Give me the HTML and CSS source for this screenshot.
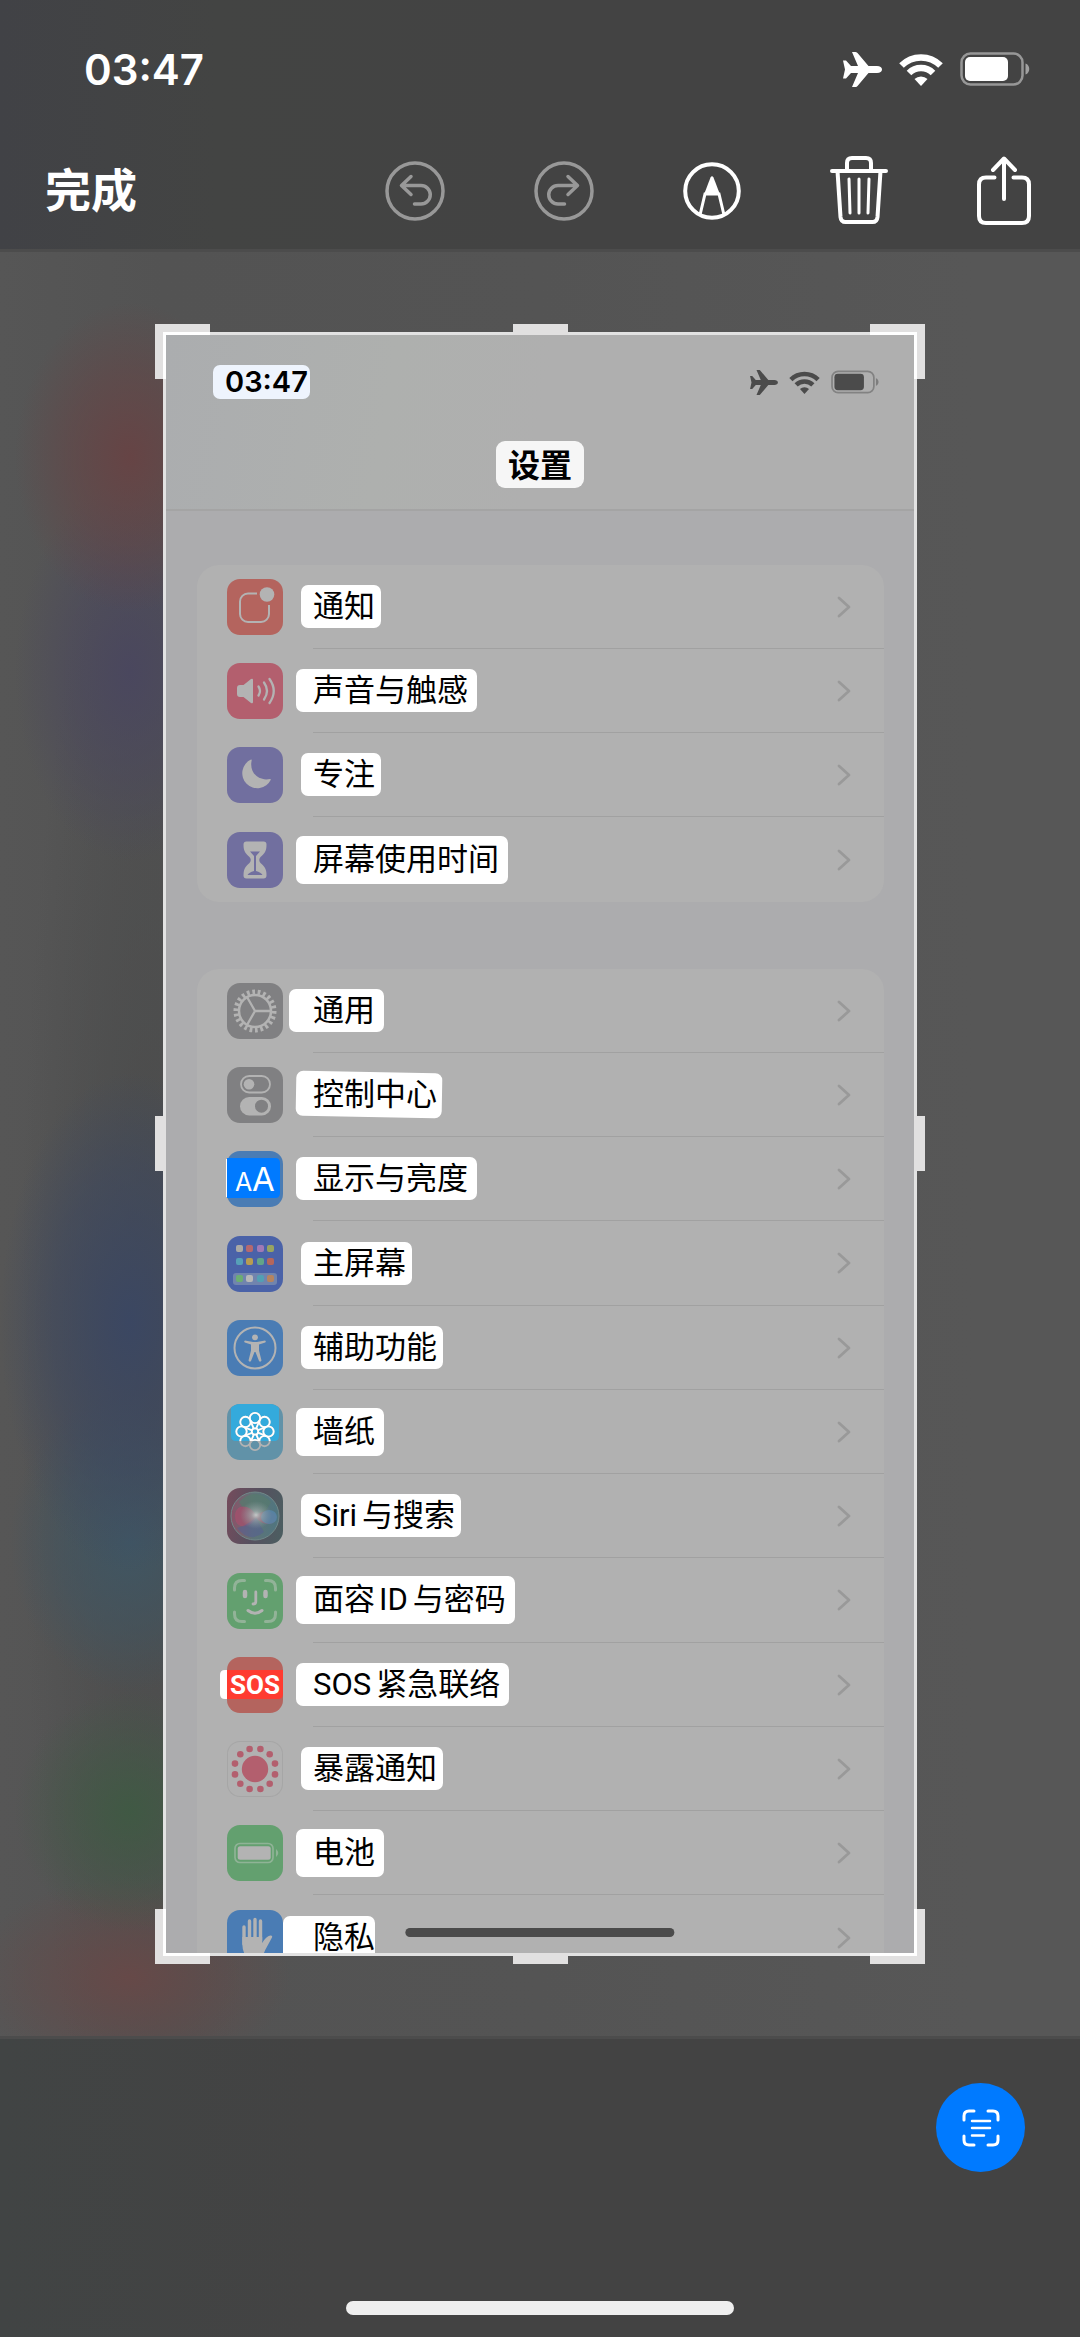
FILE: index.html
```html
<!DOCTYPE html>
<html lang="zh-CN">
  <head>
    <meta charset="UTF-8" />
    <meta name="viewport" content="width=device-width, initial-scale=1" />
    <title>截屏编辑</title>
    <link rel="stylesheet" href="styles.css">
  </head>
  <body>
    <svg class="sprite" aria-hidden="true">
      <symbol id="plane" viewBox="0 0 39 35">
        <path fill="currentColor" d="M39 17.500c0 2.200-2 3.500-5 3.500h-8.500L14.500 34c-.8 1-1.500 1-3 1H9l6-14H8l-5 5.500H0L2 17.500 0 8.500h3L8 14h7L9 0h2.500c1.500 0 2.200 0 3 1L25.500 14H34c3 0 5 1.300 5 3.500z"/>
      </symbol>
      <symbol id="wifi" viewBox="0 0 44 33">
        <g fill="none" stroke="currentColor" stroke-width="6.500">
          <path d="M2.500 12.500a27.500 27.500 0 0 1 39 0"/>
          <path d="M10 20a17 17 0 0 1 24 0"/>
        </g>
        <path fill="currentColor" d="M15.500 26a9.500 9.500 0 0 1 13 0L22 33z"/>
      </symbol>
      <symbol id="battery" viewBox="0 0 70 34">
        <rect x="1.500" y="1.500" width="61" height="31" rx="9" fill="none" stroke="currentColor" stroke-width="2.500" opacity=".45"/>
        <rect x="5" y="5" width="43" height="24" rx="5" fill="currentColor"/>
        <path d="M65.500 11.500c5 1.500 5 9.500 0 11z" fill="currentColor" opacity=".5"/>
      </symbol>
      <symbol id="chevron" viewBox="0 0 14 22">
        <path d="M2 2l10 9L2 20" fill="none" stroke="currentColor" stroke-width="2.800" stroke-linecap="round" stroke-linejoin="round"/>
      </symbol>
      <symbol id="flower" viewBox="0 0 56 56">
        <g fill="none" stroke="currentColor" stroke-width="1.800">
          <circle cx="28" cy="27.500" r="3.200"/>
          <g id="petals">
            <circle cx="28" cy="14" r="5.200"/>
            <circle cx="28" cy="41" r="5.200"/>
            <circle cx="14.500" cy="27.500" r="5.200"/>
            <circle cx="41.500" cy="27.500" r="5.200"/>
            <path d="M31 28.700l8 3.300M26.800 30.500l-3.300 8M25 26.300l-8-3.300M29.200 24.500l3.300-8"/>
          </g>
          <use href="#petals" transform="rotate(45 28 27.500)"/>
        </g>
      </symbol>
    </svg>

    <header class="topbar">
      <div class="status">
        <time class="clock">03:47</time>
        <div class="status-icons">
          <svg class="i-plane"><use href="#plane"/></svg>
          <svg class="i-wifi"><use href="#wifi"/></svg>
          <svg class="i-battery"><use href="#battery"/></svg>
        </div>
      </div>
      <nav class="toolbar">
        <button class="done" type="button">完成</button>
        <div class="tools">
          <button type="button" aria-label="撤销" disabled>
            <svg width="60" height="60" viewBox="0 0 60 60" fill="none" stroke="currentColor" stroke-width="3.500" stroke-linecap="round" stroke-linejoin="round">
              <circle cx="30" cy="30" r="28"/>
              <path d="M26 15.500L16.500 24.500 26 33.500M17 24.500h19a9 9 0 0 1 0 18.500h-6.500"/>
            </svg>
          </button>
          <button type="button" aria-label="重做" disabled>
            <svg width="60" height="60" viewBox="0 0 60 60" fill="none" stroke="currentColor" stroke-width="3.500" stroke-linecap="round" stroke-linejoin="round">
              <circle cx="30" cy="30" r="28"/>
              <path d="M34 15.500l9.500 9-9.500 9M43 24.500H24a9 9 0 0 0 0 18.500h6.500"/>
            </svg>
          </button>
          <button type="button" aria-label="标记">
            <svg width="58" height="58" viewBox="0 0 58 58" fill="none" stroke="currentColor" stroke-width="4">
              <circle cx="29" cy="29" r="26.800"/>
              <path d="M17 53l5-21h14l5 21" stroke-width="3"/>
              <path d="M21 32.500l6.500-17q1.500-2.500 3 0l6.500 17z" fill="currentColor" stroke="none"/>
            </svg>
          </button>
          <button type="button" aria-label="删除">
            <svg width="58" height="70" viewBox="0 0 58 70" fill="none" stroke="currentColor" stroke-width="4" stroke-linecap="round" stroke-linejoin="round">
              <path d="M2 15h54M17 14V7q0-5 5-5h14q5 0 5 5v7M7.500 15l3 46q.5 5 5 5h27q4.500 0 5-5l3-46"/>
              <path d="M19 23l1 34M29 23v34M39 23l-1 34" stroke-width="3"/>
            </svg>
          </button>
          <button type="button" aria-label="共享">
            <svg width="54" height="70" viewBox="0 0 54 70" fill="none" stroke="currentColor" stroke-width="4" stroke-linecap="round" stroke-linejoin="round">
              <path d="M17.500 21.500H9q-7 0-7 7V60q0 7 7 7h36q7 0 7-7V28.500q0-7-7-7h-8.500M27 43V3M16 14L27 2.500 38 14"/>
            </svg>
          </button>
        </div>
      </nav>
    </header>

    <main class="canvas">
      <div class="crop">
        <div class="shot">
          <header class="shot-head">
            <div class="status">
              <time class="clock">03:47</time>
              <div class="status-icons">
                <svg class="i-plane"><use href="#plane"/></svg>
                <svg class="i-wifi"><use href="#wifi"/></svg>
                <svg class="i-battery"><use href="#battery"/></svg>
              </div>
            </div>
            <h1><span>设置</span></h1>
          </header>

          <ul class="group">
            <li><a class="row" href="#">
              <svg class="icon red" viewBox="0 0 56 56">
                <path d="M30 14.500h-9a8 8 0 0 0-8 8V35a8 8 0 0 0 8 8h13a8 8 0 0 0 8-8v-9" fill="none" stroke="currentColor" stroke-width="2"/>
                <circle cx="40" cy="15.500" r="7.300" fill="currentColor"/>
              </svg>
              <span class="cell"><span class="mark">通知</span><svg class="chev"><use href="#chevron"/></svg></span>
            </a></li>
            <li><a class="row" href="#">
              <svg class="icon pink" viewBox="0 0 56 56">
                <path d="M10 25q0-3 3-3h3.500l7.500-6q2-1 2 1v22q0 2-2 1l-7.500-6H13q-3 0-3-3z" fill="currentColor"/>
                <path d="M31.500 23.500q3 4.500 0 9M37 19.500q6 8.500 0 17M42.500 16q8.500 12 0 24" fill="none" stroke="currentColor" stroke-width="2.300" stroke-linecap="round"/>
              </svg>
              <span class="cell"><span class="mark wide">声音与触感</span><svg class="chev"><use href="#chevron"/></svg></span>
            </a></li>
            <li><a class="row" href="#">
              <svg class="icon purple" viewBox="0 0 56 56">
                <path d="M24 12.600q.8-.3.700.7C22 25 31 34.500 43 32q1-.2.800.7A15 15 0 1 1 24 12.600z" fill="currentColor"/>
              </svg>
              <span class="cell"><span class="mark">专注</span><svg class="chev"><use href="#chevron"/></svg></span>
            </a></li>
            <li><a class="row" href="#">
              <svg class="icon purple" viewBox="0 0 56 56">
                <path d="M19.500 9.500h17q3 0 3 3c0 7-2 9-6 12.500q-2.500 3 0 6c4 3.500 6 5.500 6 12.500q0 3-3 3h-17q-3 0-3-3c0-7 2-9 6-12.500q2.500-3 0-6c-4-3.500-6-5.500-6-12.500q0-3 3-3z" fill="currentColor"/>
                <path d="M23 19.500h10l-4 4.500v15q5 1.500 6.500 4h-15q1.500-2.500 6.500-4V24z" fill="#716f9f"/>
              </svg>
              <span class="cell"><span class="mark wide tall">屏幕使用时间</span><svg class="chev"><use href="#chevron"/></svg></span>
            </a></li>
          </ul>

          <ul class="group">
            <li><a class="row" href="#">
              <svg class="icon gray" viewBox="0 0 56 56">
                <g fill="none" stroke="currentColor">
                  <circle cx="28" cy="28" r="16" stroke-width="2.500"/>
                  <circle cx="28" cy="28" r="19" stroke-width="5" pathLength="44" stroke-dasharray="1 1"/>
                  <path d="M28 28h16M28 28l-8-14M28 28l-8 14" stroke-width="2.300"/>
                </g>
              </svg>
              <span class="cell"><span class="mark far">通用</span><svg class="chev"><use href="#chevron"/></svg></span>
            </a></li>
            <li><a class="row" href="#">
              <svg class="icon gray" viewBox="0 0 56 56">
                <rect x="14" y="9" width="29" height="16.500" rx="8.200" fill="none" stroke="currentColor" stroke-width="1.800"/>
                <circle cx="22" cy="17.200" r="5.300" fill="currentColor"/>
                <rect x="13" y="30" width="31" height="18.500" rx="9.200" fill="currentColor"/>
                <circle cx="34.500" cy="39.200" r="6.500" fill="#808082"/>
              </svg>
              <span class="cell"><span class="mark wide tilt">控制中心</span><svg class="chev"><use href="#chevron"/></svg></span>
            </a></li>
            <li><a class="row" href="#">
              <svg class="icon blue" viewBox="0 0 56 56">
                <path d="M-1 8h4v38h-4z" fill="#fff"/>
                <path d="M0 7h48q5 0 5 5v30q0 5-5 5H0z" fill="#007aff"/>
                <text class="glyph-text" x="8" y="40" font-size="25">A</text>
                <text class="glyph-text" x="25" y="40" font-size="33">A</text>
              </svg>
              <span class="cell"><span class="mark wide">显示与亮度</span><svg class="chev"><use href="#chevron"/></svg></span>
            </a></li>
            <li><a class="row" href="#">
              <svg class="icon indigo" viewBox="0 0 56 56">
                <rect x="6" y="37" width="44" height="12" rx="3" fill="#7184ae"/>
                <rect x="9" y="9" width="7" height="7" rx="2" fill="#aaa9a5"/>
                <rect x="19" y="9" width="7" height="7" rx="2" fill="#b5686e"/>
                <rect x="30" y="9" width="7" height="7" rx="2" fill="#a079b6"/>
                <rect x="40" y="9" width="7" height="7" rx="2" fill="#98a460"/>
                <rect x="9" y="22" width="7" height="7" rx="2" fill="#57a0b8"/>
                <rect x="19" y="22" width="7" height="7" rx="2" fill="#b89c50"/>
                <rect x="30" y="22" width="7" height="7" rx="2" fill="#63a488"/>
                <rect x="40" y="22" width="7" height="7" rx="2" fill="#b5665c"/>
                <rect x="9" y="39" width="7" height="7" rx="2" fill="#6cae72"/>
                <rect x="19" y="39" width="7" height="7" rx="2" fill="#b8b8b8"/>
                <rect x="30" y="39" width="7" height="7" rx="2" fill="#52a0b4"/>
                <rect x="40" y="39" width="7" height="7" rx="2" fill="#b58460"/>
              </svg>
              <span class="cell"><span class="mark">主屏幕</span><svg class="chev"><use href="#chevron"/></svg></span>
            </a></li>
            <li><a class="row" href="#">
              <svg class="icon blue" viewBox="0 0 56 56">
                <circle cx="28" cy="28" r="20.500" fill="none" stroke="currentColor" stroke-width="2"/>
                <circle cx="28" cy="17.300" r="2.900" fill="currentColor"/>
                <path d="M18 20.500l8 1.500h4l8-1.500q1.500.8.2 2L32 24.500v6l2.500 10q-1 2-2.500.5l-3.500-9h-1l-3.500 9q-1.500 1.500-2.500-.5l2.500-10v-6l-6.200-2q-1.300-1.200.2-2z" fill="currentColor"/>
              </svg>
              <span class="cell"><span class="mark">辅助功能</span><svg class="chev"><use href="#chevron"/></svg></span>
            </a></li>
            <li><a class="row" href="#">
              <svg class="icon teal" viewBox="0 0 56 56">
                <clipPath id="lit"><rect x="4" width="48" height="37"/></clipPath>
                <path d="M4 4q4-4 9-4h30q5 0 9 4v28q0 5-5 5H9q-5 0-5-5z" fill="#34aadc"/>
                <use href="#flower" width="56" height="56"/>
                <use href="#flower" width="56" height="56" color="#fff" clip-path="url(#lit)"/>
              </svg>
              <span class="cell"><span class="mark wide tall">墙纸</span><svg class="chev"><use href="#chevron"/></svg></span>
            </a></li>
            <li><a class="row" href="#">
              <svg class="icon siri" viewBox="0 0 56 56">
                <defs>
                  <radialGradient id="glow"><stop offset="0" stop-color="#c4c8c8"/><stop offset=".3" stop-color="#a3abad" stop-opacity=".7"/><stop offset="1" stop-color="#8a9a9c" stop-opacity="0"/></radialGradient>
                  <linearGradient id="orb"><stop offset="0" stop-color="#8a5268"/><stop offset=".45" stop-color="#5f7477"/><stop offset="1" stop-color="#4f7580"/></linearGradient>
                </defs>
                <circle cx="28" cy="28" r="24" fill="url(#orb)" stroke="#708788"/>
                <path d="M12 14Q28-2 44 14 36 30 29 28 18 24 12 14z" fill="#577b6e" opacity=".7"/>
                <path d="M8 28c0-12 14-13 21-1 6-4 17-6 20 2 0 9-13 9-20 1-5 10-21 13-21-2z" fill="#a84e6c" opacity=".7"/>
                <ellipse cx="42" cy="29" rx="8" ry="7" fill="#5684a5" opacity=".9"/>
                <path d="M10 40q10-2 19-11 4 8 8 15-14 12-27-4z" fill="#565f94" opacity=".55"/>
                <ellipse cx="29" cy="27" rx="16" ry="14" fill="url(#glow)"/>
              </svg>
              <span class="cell"><span class="mark"><span class="latin">Siri</span>与搜索</span><svg class="chev"><use href="#chevron"/></svg></span>
            </a></li>
            <li><a class="row" href="#">
              <svg class="icon green" viewBox="0 0 56 56" fill="none" stroke-linecap="round">
                <path d="M7.500 17v-2q0-7.500 7.500-7.500h2.500M38.500 7.500H41q7.500 0 7.500 7.500v2M48.500 39v2q0 7.500-7.500 7.500h-2.500M17.500 48.500H15q-7.500 0-7.500-7.500v-2" stroke="#92b398" stroke-width="3"/>
                <path d="M18 19v4M38.500 19v4" stroke="currentColor" stroke-width="4.500"/>
                <path d="M28.800 19v9.500q0 2.500-2.800 2.500" stroke="currentColor" stroke-width="2.800"/>
                <path d="M21 37.500q7 5.500 14 0" stroke="currentColor" stroke-width="3"/>
              </svg>
              <span class="cell"><span class="mark wide tall">面容<span class="latin mid">ID</span>与密码</span><svg class="chev"><use href="#chevron"/></svg></span>
            </a></li>
            <li><a class="row" href="#">
              <svg class="icon red" viewBox="0 0 56 56">
                <path d="M0 13h-2q-5 0-5 5v19q0 5 5 5h2z" fill="#fff"/>
                <path d="M0 13h56v24q0 5-5 5H0z" fill="#ff3b30"/>
                <text class="glyph-text sos" x="28" y="37" font-size="26" text-anchor="middle">SOS</text>
              </svg>
              <span class="cell"><span class="mark wide"><span class="latin">SOS</span>紧急联络</span><svg class="chev"><use href="#chevron"/></svg></span>
            </a></li>
            <li><a class="row" href="#">
              <svg class="icon plain" viewBox="0 0 56 56" fill="#b35f6e">
                <circle cx="28" cy="28" r="13.200"/>
                <g id="dots">
                  <circle cx="22.600" cy="8" r="3.300"/>
                  <circle cx="33.400" cy="8" r="3.300"/>
                  <circle cx="13.300" cy="13.300" r="3.300"/>
                  <circle cx="42.700" cy="13.300" r="3.300"/>
                  <circle cx="8" cy="22.600" r="3.300"/>
                  <circle cx="48" cy="22.600" r="3.300"/>
                </g>
                <use href="#dots" transform="rotate(180 28 28)"/>
              </svg>
              <span class="cell"><span class="mark">暴露通知</span><svg class="chev"><use href="#chevron"/></svg></span>
            </a></li>
            <li><a class="row" href="#">
              <svg class="icon green" viewBox="0 0 56 56">
                <rect x="8" y="18.500" width="38" height="19" rx="5" fill="none" stroke="#8fb396" stroke-width="1.700"/>
                <rect x="10.700" y="21.300" width="33" height="13.500" rx="2.500" fill="currentColor"/>
                <path d="M49 24q4.500 4 0 8z" fill="#8fb396"/>
              </svg>
              <span class="cell"><span class="mark wide tall">电池</span><svg class="chev"><use href="#chevron"/></svg></span>
            </a></li>
            <li><a class="row" href="#">
              <svg class="icon blue" viewBox="0 0 56 56">
                <path d="M17 17v17M22.500 11v20M28 9.500v20M33.500 11v20" stroke="currentColor" stroke-width="3.400" stroke-linecap="round"/>
                <path d="M15.300 27h19.900v6q4-7 8-7.500 3-.2 1.500 2.500l-6.500 12q-3 9-11 9-11.500 0-11.900-15z" fill="currentColor"/>
              </svg>
              <span class="cell"><span class="mark farther">隐私</span><svg class="chev"><use href="#chevron"/></svg></span>
            </a></li>
          </ul>
          <div class="home-bar"></div>
        </div>

        <span class="corner tl"></span>
        <span class="corner tr"></span>
        <span class="corner bl"></span>
        <span class="corner br"></span>
        <span class="edge top"></span>
        <span class="edge bottom"></span>
        <span class="edge left"></span>
        <span class="edge right"></span>
      </div>
    </main>

    <footer class="bottombar">
      <button class="scan" type="button" aria-label="识别文本">
        <svg width="38" height="38" viewBox="0 0 38 38" fill="none" stroke="currentColor" stroke-width="3" stroke-linecap="round">
          <path d="M2 11V7q0-5 5-5h5M26 2h5q5 0 5 5v4M36 27v4q0 5-5 5h-5M12 36H7q-5 0-5-5v-4"/>
          <path d="M10 12h18M10 19h18M10 26.500h12" stroke-width="2.500"/>
        </svg>
      </button>
      <div class="home-bar"></div>
    </footer>
  </body>
</html>
```
FILE: styles.css
```css
:root {
  --bar: #434343;
  --canvas: #575757;
  --shot-bg: #acacae;
  --shot-card: #b1b1b1;
  --glyph: #b3b3b3;
  --handle: #e1e0e0;
}
* {
  box-sizing: border-box;
  margin: 0;
  padding: 0;
}
body {
  display: flex;
  flex-direction: column;
  height: 100vh;
  background: var(--bar);
  color: #fff;
  font-family: Roboto, "Noto Sans CJK SC", sans-serif;
}
button {
  background: none;
  border: none;
  color: inherit;
  font: inherit;
  cursor: pointer;
}
svg {
  display: block;
  flex: none;
}
.sprite {
  position: absolute;
  width: 0;
  height: 0;
}

/* status row, shared by the phone and the captured screen */
.status {
  display: flex;
  align-items: center;
  justify-content: space-between;
}
.status-icons {
  display: flex;
  align-items: center;
}
.clock {
  font-family: Inter, sans-serif;
  font-weight: 600;
}

.topbar {
  flex: none;
  background: linear-gradient(90deg, #414246, #434443 20%, var(--bar) 50%);
  border-bottom: 3px solid #4c4c4c;
}
.topbar .status {
  height: 138px;
  padding: 0 50px 0 84px;
}
.topbar .status-icons {
  gap: 17px;
}
.topbar .clock {
  font-size: 42px;
}
.topbar .i-plane { width: 39px; height: 35px; }
.topbar .i-wifi { width: 44px; height: 33px; }
.topbar .i-battery { width: 70px; height: 34px; }
.toolbar {
  display: flex;
  align-items: center;
  justify-content: space-between;
  height: 111px;
  padding: 0 49px 6px 45px;
}
.done {
  font-size: 46px;
  line-height: 60px;
  font-weight: 700;
}
.tools {
  display: flex;
  align-items: center;
  gap: 89px;
}
.tools button:disabled {
  color: #989898;
}

.canvas {
  flex: 1;
  min-height: 0;
  display: flex;
  padding: 80px 163px;
  background:
    radial-gradient(115px 155px at 130px 205px, #664445, #66444580 55%, transparent),
    radial-gradient(115px 190px at 130px 420px, #4a475e, #4a475e80 55%, transparent),
    radial-gradient(130px 250px at 130px 1070px, #3b4762, #3b476280 60%, transparent),
    radial-gradient(120px 150px at 130px 1290px, #405663, #40566380 60%, transparent),
    radial-gradient(115px 120px at 130px 1559px, #405944, #40594480 50%, transparent),
    radial-gradient(160px 100px at 130px 1725px, #664948, #66494880 50%, transparent),
    radial-gradient(130px 900px at 150px 1100px, #4a4b4b, transparent),
    linear-gradient(90deg, #565656, #535353 15%, #545454 50%, var(--canvas) 90%);
}
.crop {
  position: relative;
  flex: 1;
  display: flex;
  border: 3px solid #e2e2e2;
}
.shot {
  position: relative;
  flex: 1;
  overflow: hidden;
  background: var(--shot-bg);
  color: #000;
}
.corner {
  position: absolute;
  width: 55px;
  height: 55px;
  border: 0 solid var(--handle);
}
.tl { top: -11px; left: -11px; border-width: 8px 0 0 8px; box-shadow: inset 3px 3px #fff; }
.tr { top: -11px; right: -11px; border-width: 8px 8px 0 0; box-shadow: inset -3px 3px #fff; }
.bl { bottom: -11px; left: -11px; border-width: 0 0 8px 8px; box-shadow: inset 3px -3px #fff; }
.br { bottom: -11px; right: -11px; border-width: 0 8px 8px 0; box-shadow: inset -3px -3px #fff; }
.edge {
  position: absolute;
  width: 55px;
  height: 11px;
  background: var(--handle);
}
.top { top: -11px; left: calc(50% - 27px); }
.bottom { bottom: -11px; left: calc(50% - 27px); }
.left,
.right {
  width: 11px;
  height: 55px;
  top: calc(50% - 28px);
}
.left { left: -11px; }
.right { right: -11px; }

/* captured settings screen */
.shot-head {
  padding-top: 30px;
  background: linear-gradient(100deg, #abadaf, #aeb0ae 30%, #afafaf 50%);
  border-bottom: 2px solid #a4a4a4;
}
.shot-head .status {
  padding: 0 35px 0 47px;
  color: #4b4b4b;
}
.shot-head .status-icons {
  gap: 11px;
}
.shot-head .clock {
  padding: 0 2px 0 12px;
  background: #eef4fd;
  border-radius: 7px;
  color: #000;
  font-size: 29px;
  line-height: 34px;
}
.shot-head .i-plane { width: 28px; height: 25px; }
.shot-head .i-wifi { width: 31px; height: 23px; }
.shot-head .i-battery { width: 48px; height: 24px; }
.shot-head h1 {
  padding: 42px 0 21px;
  font-size: 32px;
  line-height: 43px;
  text-align: center;
}
.shot-head h1 span {
  display: inline-block;
  padding: 4px 12px 0;
  background: #f6f6f6;
  border-radius: 9px;
}
.group {
  margin: 54px 30px 67px 31px;
  background: var(--shot-card);
  border-radius: 22px;
  list-style: none;
}
.row {
  display: flex;
  align-items: center;
  gap: 30px;
  height: 84px;
  padding-left: 30px;
  color: inherit;
  text-decoration: none;
}
.group li:nth-child(4n) .row {
  height: 85px;
}
.cell {
  flex: 1;
  display: flex;
  align-items: center;
  justify-content: space-between;
  height: 100%;
  padding-right: 33px;
  border-bottom: 1px solid #a1a1a1;
}
.group li:last-child .cell {
  border-bottom: none;
}
.chev {
  width: 14px;
  height: 22px;
  color: #999;
}

.mark {
  position: relative;
  z-index: 0;
  margin-left: -12px;
  padding: 0 6px 0 12px;
  background: #fff;
  border-radius: 7px;
  font-size: 31px;
  line-height: 43px;
  white-space: nowrap;
}
.mark.wide {
  margin-left: -17px;
  padding: 0 9px 0 17px;
}
.mark.far {
  margin-left: -24px;
  padding: 0 9px 0 24px;
}
.mark.farther {
  margin-left: -30px;
  padding: 0 0 0 30px;
}
.mark.tall {
  line-height: 48px;
}
.mark.tilt {
  padding-right: 5px;
  background: none;
}
.mark.tilt::before {
  content: "";
  position: absolute;
  inset: -1px 0;
  z-index: -1;
  background: #fff;
  border-radius: 7px;
  transform: rotate(1deg);
}
.latin {
  margin-right: 5px;
}
.latin.mid {
  margin-left: 4px;
}

.icon {
  width: 56px;
  height: 56px;
  border-radius: 13px;
  overflow: visible;
  color: var(--glyph);
}
.red { background: #b4645e; }
.pink { background: #b35f6e; }
.purple { background: #716f9f; }
.gray { background: #808082; }
.blue { background: #4a7cb4; }
.indigo { background: #4a62a8; }
.teal { background: #6192a8; }
.green { background: #63a06f; }
.siri { background: linear-gradient(100deg, #754c5c, #56505f 50%, #4b5f61); }
.plain { box-shadow: inset 0 0 0 1px #a6a6a6; }
.glyph-text {
  fill: #fff;
  font-family: Inter, sans-serif;
}
.sos {
  font-family: Roboto, sans-serif;
  font-weight: 700;
}

.home-bar {
  border-radius: 7px;
}
.shot .home-bar {
  position: absolute;
  bottom: 16px;
  left: 50%;
  width: 36%;
  height: 9px;
  background: #4b4b4b;
  transform: translateX(-50%);
}

.bottombar {
  flex: none;
  display: flex;
  flex-direction: column;
  gap: 129px;
  padding: 44px 55px 22px;
  background: linear-gradient(90deg, #414444, var(--bar) 30%);
  border-top: 3px solid #4c4c4c;
}
.scan {
  display: flex;
  align-items: center;
  justify-content: center;
  align-self: flex-end;
  width: 89px;
  height: 89px;
  background: #007aff;
  border-radius: 50%;
}
.bottombar .home-bar {
  align-self: center;
  width: 40%;
  height: 14px;
  background: #efefef;
}
```
